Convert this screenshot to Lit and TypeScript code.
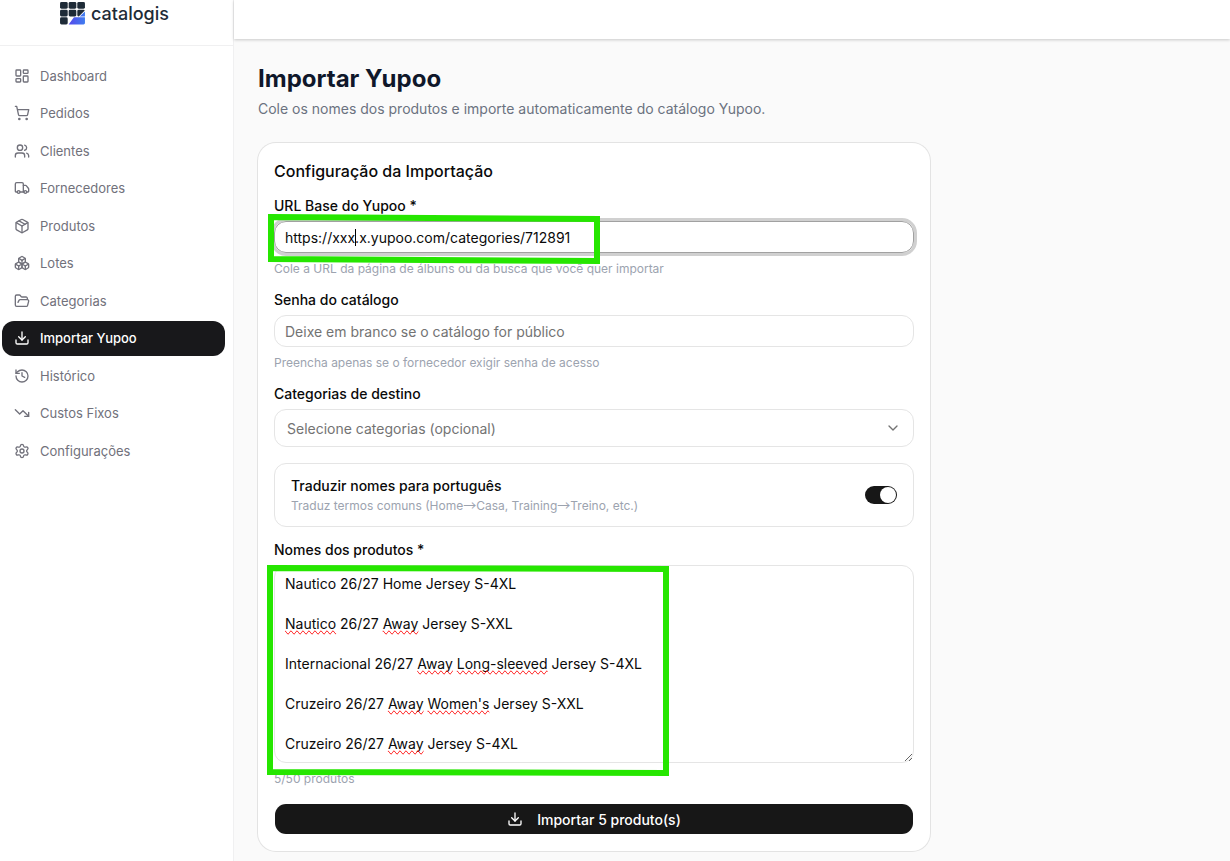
import { LitElement, html, css, svg } from "lit";
import { customElement, state } from "lit/decorators.js";
import { classMap } from "lit/directives/class-map.js";

const icons: Record<string, unknown> = {
  dashboard: svg`<rect width="7" height="9" x="3" y="3" rx="1"/><rect width="7" height="5" x="14" y="3" rx="1"/><rect width="7" height="9" x="14" y="12" rx="1"/><rect width="7" height="5" x="3" y="16" rx="1"/>`,
  cart: svg`<circle cx="8" cy="21" r="1"/><circle cx="19" cy="21" r="1"/><path d="M2.05 2.05h2l2.66 12.42a2 2 0 0 0 2 1.58h9.78a2 2 0 0 0 1.95-1.57l1.65-7.43H5.12"/>`,
  users: svg`<path d="M16 21v-2a4 4 0 0 0-4-4H6a4 4 0 0 0-4 4v2"/><path d="M16 3.128a4 4 0 0 1 0 7.744"/><path d="M22 21v-2a4 4 0 0 0-3-3.87"/><circle cx="9" cy="7" r="4"/>`,
  truck: svg`<path d="M14 18V6a2 2 0 0 0-2-2H4a2 2 0 0 0-2 2v11a1 1 0 0 0 1 1h2"/><path d="M15 18H9"/><path d="M19 18h2a1 1 0 0 0 1-1v-3.65a1 1 0 0 0-.22-.624l-3.48-4.35A1 1 0 0 0 17.52 8H14"/><circle cx="17" cy="18" r="2"/><circle cx="7" cy="18" r="2"/>`,
  package: svg`<path d="M11 21.73a2 2 0 0 0 2 0l7-4A2 2 0 0 0 21 16V8a2 2 0 0 0-1-1.73l-7-4a2 2 0 0 0-2 0l-7 4A2 2 0 0 0 3 8v8a2 2 0 0 0 1 1.73z"/><path d="M12 22V12"/><path d="M3.29 7 12 12l8.71-5"/><path d="m7.5 4.27 9 5.15"/>`,
  boxes: svg`<path d="M2.97 12.92A2 2 0 0 0 2 14.63v3.24a2 2 0 0 0 .97 1.71l3 1.8a2 2 0 0 0 2.06 0L12 19v-5.5l-5-3-4.03 2.42Z"/><path d="m7 16.5-4.74-2.85"/><path d="m7 16.5 5-3"/><path d="M7 16.5v5.17"/><path d="M12 13.5V19l3.97 2.38a2 2 0 0 0 2.06 0l3-1.8a2 2 0 0 0 .97-1.71v-3.24a2 2 0 0 0-.97-1.71L17 10.5l-5 3Z"/><path d="m17 16.5-5-3"/><path d="m17 16.5 4.74-2.85"/><path d="M17 16.5v5.17"/><path d="M7.97 4.42A2 2 0 0 0 7 6.13v4.37l5 3 5-3V6.13a2 2 0 0 0-.97-1.71l-3-1.8a2 2 0 0 0-2.06 0l-3 1.8Z"/><path d="M12 8 7.26 5.15"/><path d="m12 8 4.74-2.85"/><path d="M12 13.5V8"/>`,
  folder: svg`<path d="m6 14 1.5-2.9A2 2 0 0 1 9.24 10H20a2 2 0 0 1 1.94 2.5l-1.54 6a2 2 0 0 1-1.95 1.5H4a2 2 0 0 1-2-2V5a2 2 0 0 1 2-2h3.9a2 2 0 0 1 1.69.9l.81 1.2a2 2 0 0 0 1.67.9H18a2 2 0 0 1 2 2v2"/>`,
  download: svg`<path d="M21 15v4a2 2 0 0 1-2 2H5a2 2 0 0 1-2-2v-4"/><path d="M12 15V3"/><path d="m7 10 5 5 5-5"/>`,
  history: svg`<path d="M3 12a9 9 0 1 0 9-9 9.75 9.75 0 0 0-6.74 2.74L3 8"/><path d="M3 3v5h5"/><path d="M12 7v5l4 2"/>`,
  trend: svg`<path d="M16 17h6v-6"/><path d="m22 17-8.5-8.5-5 5L2 7"/>`,
  settings: svg`<path d="M9.671 4.136a2.34 2.34 0 0 1 4.659 0 2.34 2.34 0 0 0 3.319 1.915 2.34 2.34 0 0 1 2.33 4.033 2.34 2.34 0 0 0 0 3.831 2.34 2.34 0 0 1-2.33 4.033 2.34 2.34 0 0 0-3.319 1.915 2.34 2.34 0 0 1-4.659 0 2.34 2.34 0 0 0-3.32-1.915 2.34 2.34 0 0 1-2.33-4.033 2.34 2.34 0 0 0 0-3.831A2.34 2.34 0 0 1 6.35 6.051a2.34 2.34 0 0 0 3.319-1.915"/><circle cx="12" cy="12" r="3"/>`,
  chevron: svg`<path d="m6 9 6 6 6-6"/>`,
};

const icon = (name: string) => html`<svg class="icon" viewBox="0 0 24 24" aria-hidden="true">${icons[name]}</svg>`;

const iconStyles = css`
  .icon {
    width: 16px;
    height: 16px;
    flex: none;
    fill: none;
    stroke: currentColor;
    stroke-width: 2;
    stroke-linecap: round;
    stroke-linejoin: round;
  }
`;

@customElement("side-nav")
class SideNav extends LitElement {
  static styles = [
    iconStyles,
    css`
      :host {
        display: block;
        background: #fff;
        border-right: 1px solid #f0f0f1;
      }
      .brand {
        display: flex;
        align-items: flex-start;
        justify-content: center;
        gap: 6px;
        height: 46px;
        padding-right: 4px;
        box-sizing: border-box;
        border-bottom: 1px solid #f0f0f1;
        color: #1e2b37;
        font-size: 18px;
        line-height: 28px;
        font-weight: 500;
        text-decoration: none;
      }
      .mark {
        width: 25px;
        height: 23px;
        margin-top: 2px;
      }
      .list {
        display: flex;
        flex-direction: column;
        justify-content: space-between;
        min-height: 410px;
        margin: 0;
        padding: 12px 8px 12px 2px;
        list-style: none;
      }
      .item {
        display: flex;
        align-items: center;
        gap: 10px;
        height: 35px;
        padding: 0 12px;
        border-radius: 12px;
        color: #71717b;
        font-size: 13px;
        text-decoration: none;
      }
      .active {
        background: #18181b;
        color: #fff;
        font-weight: 500;
      }
    `,
  ];

  private items = [
    ["dashboard", "Dashboard"],
    ["cart", "Pedidos"],
    ["users", "Clientes"],
    ["truck", "Fornecedores"],
    ["package", "Produtos"],
    ["boxes", "Lotes"],
    ["folder", "Categorias"],
    ["download", "Importar Yupoo"],
    ["history", "Histórico"],
    ["trend", "Custos Fixos"],
    ["settings", "Configurações"],
  ];

  render() {
    return html`
      <a class="brand" href="#">
        <svg class="mark" viewBox="0 0 26 24" aria-hidden="true">
          <defs>
            <linearGradient id="blue" x1="0" x2="1"><stop offset="0" stop-color="#5648ea" /><stop offset="1" stop-color="#3f7df0" /></linearGradient>
          </defs>
          <g fill="#1e2b37">
            <rect x="0" y="0" width="8" height="7" rx="1.500" />
            <rect x="9" y="0" width="8" height="7" rx="1.500" />
            <rect x="18" y="0" width="8" height="7" rx="1.500" />
            <rect x="0" y="8" width="8" height="7" rx="1.500" />
            <rect x="9" y="8" width="8" height="7" rx="1.500" />
            <path d="M19.500 8h5a1.500 1.500 0 0 1 1.300.8L19.500 15a1.500 1.500 0 0 1-1.500-1.500V9.500A1.500 1.500 0 0 1 19.500 8z" />
            <rect x="0" y="16" width="8" height="7.500" rx="1.500" />
          </g>
          <path fill="url(#blue)" d="M26 10v5h-5.500z M14.500 16h11.500v6a1.500 1.500 0 0 1-1.500 1.500h-15.500z" />
        </svg>
        <span>catalogis</span>
      </a>
      <nav>
        <ul class="list">
          ${this.items.map(
            ([name, label]) => html`<li>
              <a class=${classMap({ item: true, active: name === "download" })} href="#">${icon(name)}<span>${label}</span></a>
            </li>`
          )}
        </ul>
      </nav>
    `;
  }
}

@customElement("import-form")
class ImportForm extends LitElement {
  static styles = [
    iconStyles,
    css`
      :host {
        display: block;
        max-width: 672px;
      }
      * {
        box-sizing: border-box;
      }
      .card {
        position: relative;
        display: flex;
        flex-direction: column;
        gap: 16px;
        padding: 16px;
        border-radius: 18px;
        background: #fff;
        box-shadow: 0 0 0 1px #e3e3e3;
        color: #0a0a0a;
        font-size: 14px;
      }
      .title {
        margin: 0;
        font-size: 16px;
        line-height: 24px;
        font-weight: 500;
      }
      .field {
        display: flex;
        flex-direction: column;
        gap: 8px;
      }
      .label {
        display: block;
        line-height: 14px;
        font-weight: 500;
      }
      .help {
        margin: 0;
        color: #9ca3af;
        font-size: 12px;
        line-height: 16px;
      }
      .arrow {
        font-family: "Noto Sans CJK JP", sans-serif;
        font-size: 13px;
        line-height: 1;
      }
      .control {
        position: relative;
        display: flex;
      }
      .input,
      .select,
      .area {
        width: 100%;
        margin: 0;
        border: 1px solid #e5e5e5;
        border-radius: 12px;
        background: transparent;
        color: #0a0a0a;
        font: inherit;
        outline: none;
      }
      .input {
        height: 32px;
        padding: 0 10px;
      }
      .input::placeholder {
        color: #737373;
        opacity: 1;
      }
      .focused {
        border-color: #a1a1a1;
        box-shadow: 0 0 0 3px #d0d0d0;
      }
      .caret {
        position: absolute;
        left: 81px;
        top: 8px;
        width: 1px;
        height: 17px;
        background: #000;
      }
      .select {
        height: 38px;
        padding: 0 12px;
        appearance: none;
        color: #737373;
      }
      .chevron {
        position: absolute;
        right: 13px;
        top: 11px;
        color: #737373;
        pointer-events: none;
      }
      .chevron .icon {
        display: block;
      }
      .option {
        display: flex;
        align-items: center;
        justify-content: space-between;
        padding: 12px 16px;
        border: 1px solid #e5e5e5;
        border-radius: 12px;
      }
      .option .label {
        line-height: 20px;
      }
      .option .help {
        margin-top: 2px;
      }
      .switch {
        display: flex;
        justify-content: flex-end;
        align-items: center;
        width: 32px;
        height: 18px;
        margin: 0;
        padding: 1px;
        appearance: none;
        border-radius: 9px;
        background: #d4d4d4;
      }
      .switch::before {
        content: "";
        width: 16px;
        height: 16px;
        border-radius: 8px;
        background: #fff;
      }
      .switch:checked {
        background: #171717;
      }
      .switch:not(:checked) {
        justify-content: flex-start;
      }
      .area,
      .spelling {
        height: 198px;
        padding: 8px 10px;
        line-height: 20px;
      }
      .area {
        display: block;
        resize: vertical;
      }
      .spelling {
        position: absolute;
        inset: 0;
        border: 1px solid transparent;
        color: transparent;
        white-space: pre-wrap;
        pointer-events: none;
      }
      .typo {
        text-decoration-line: spelling-error;
      }
      .submit {
        display: flex;
        align-items: center;
        justify-content: center;
        gap: 14px;
        height: 32px;
        padding: 0 10px;
        border: 1px solid transparent;
        border-radius: 12px;
        background: #171717;
        background-clip: padding-box;
        color: #fff;
        font: inherit;
        font-weight: 500;
      }
      .marker {
        position: absolute;
        overflow: visible;
        fill: none;
        stroke: #26e600;
        stroke-width: 6;
        pointer-events: none;
      }
      .marker-url {
        left: 10px;
        top: 71px;
        width: 334px;
        height: 50px;
      }
      .marker-names {
        left: 8px;
        top: 421px;
        width: 404px;
        height: 212px;
      }
    `,
  ];

  @state() private names = [
    "Nautico 26/27 Home Jersey S-4XL",
    "Nautico 26/27 Away Jersey S-XXL",
    "Internacional 26/27 Away Long-sleeved Jersey S-4XL",
    "Cruzeiro 26/27 Away Women's Jersey S-XXL",
    "Cruzeiro 26/27 Away Jersey S-4XL",
  ];

  private spelling() {
    return this.names.map((line, row) => {
      const words = line.split(/(Nautico|Away|Long-sleeved|Women's)/);
      const marked = words.map((w, i) => (i % 2 && row > 0 ? html`<span class="typo">${w}</span>` : w));
      return row ? ["\n\n", marked] : marked;
    });
  }

  render() {
    const arrow = html`<span class="arrow">→</span>`;
    return html`
      <form class="card" @submit=${(e: Event) => e.preventDefault()}>
        <h2 class="title">Configuração da Importação</h2>
        <div class="field">
          <label class="label" for="url">URL Base do Yupoo *</label>
          <div class="control">
            <input class="input focused" id="url" type="text" spellcheck="false" value="https://xxx.x.yupoo.com/categories/712891" />
            <span class="caret"></span>
          </div>
          <p class="help">Cole a URL da página de álbuns ou da busca que você quer importar</p>
        </div>
        <div class="field">
          <label class="label" for="senha">Senha do catálogo</label>
          <input class="input" id="senha" type="password" placeholder="Deixe em branco se o catálogo for público" />
          <p class="help">Preencha apenas se o fornecedor exigir senha de acesso</p>
        </div>
        <div class="field">
          <label class="label" for="categorias">Categorias de destino</label>
          <div class="control">
            <select class="select" id="categorias">
              <option>Selecione categorias (opcional)</option>
            </select>
            <span class="chevron">${icon("chevron")}</span>
          </div>
        </div>
        <div class="option">
          <div>
            <label class="label" for="traduzir">Traduzir nomes para português</label>
            <p class="help">Traduz termos comuns (Home${arrow}Casa, Training${arrow}Treino, etc.)</p>
          </div>
          <input class="switch" id="traduzir" type="checkbox" role="switch" checked />
        </div>
        <div class="field">
          <label class="label" for="nomes">Nomes dos produtos *</label>
          <div class="control">
            <textarea class="area" id="nomes" spellcheck="false" .value=${this.names.join("\n\n")}></textarea>
            <div class="spelling" aria-hidden="true">${this.spelling()}</div>
          </div>
          <p class="help">${this.names.length}/50 produtos</p>
        </div>
        <button class="submit" type="submit">${icon("download")}<span>Importar ${this.names.length} produto(s)</span></button>
        <svg class="marker marker-url" viewBox="0 0 334 50" aria-hidden="true"><path d="M3 3 329 5V47L3 45Z" /></svg>
        <svg class="marker marker-names" viewBox="0 0 404 212" aria-hidden="true"><path d="M4 4 400 5V209L4 208Z" /></svg>
      </form>
    `;
  }
}

@customElement("app-root")
class AppRoot extends LitElement {
  static styles = css`
    :host {
      display: grid;
      grid-template-columns: 234px 1fr;
      min-height: 100vh;
      background: #fafafa;
      font-family: Inter, "Liberation Sans", sans-serif;
      font-size: 14px;
    }
    .topbar {
      height: 39px;
      background: #fff;
      box-shadow: 0 1px 3px rgba(0, 0, 0, 0.2);
    }
    .content {
      padding: 24px 24px 9px;
    }
    .heading {
      margin: 0 0 4px;
      color: #0f172a;
      font-size: 24px;
      line-height: 32px;
      font-weight: 700;
    }
    .lead {
      margin: 0 0 24px;
      color: #6b7280;
      line-height: 20px;
    }
  `;

  render() {
    return html`
      <side-nav></side-nav>
      <div>
        <header class="topbar"></header>
        <main class="content">
          <h1 class="heading">Importar Yupoo</h1>
          <p class="lead">Cole os nomes dos produtos e importe automaticamente do catálogo Yupoo.</p>
          <import-form></import-form>
        </main>
      </div>
    `;
  }
}
